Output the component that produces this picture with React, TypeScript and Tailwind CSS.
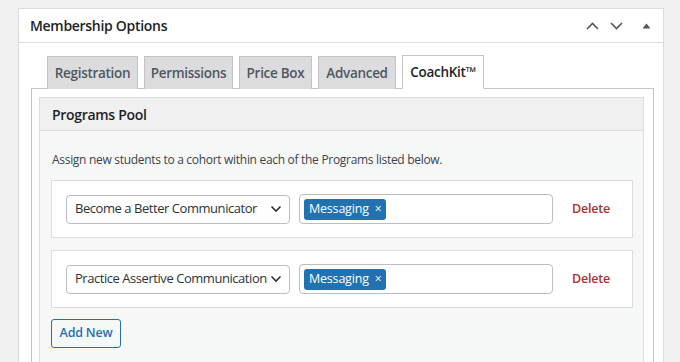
import React from 'react';

const font = { fontFamily: '"Open Sans", "Noto Sans", sans-serif' };

function Chevron({ up }: { up?: boolean }) {
  return (
    <svg width="13" height="8" viewBox="0 0 13 8" fill="none">
      <path
        d={up ? 'M1 7 L6.5 1.5 L12 7' : 'M1 1 L6.5 6.5 L12 1'}
        stroke="#50575e"
        strokeWidth="1.6"
      />
    </svg>
  );
}

function ProgramRow({ name }: { name: string }) {
  return (
    <div className="flex items-center bg-white border border-[#dcdcde] h-[58px] pl-[14px]">
      <div className="flex items-center justify-between w-[224px] h-[29px] border border-[#bcbdc0] rounded-[4px] bg-white pl-[8px] pr-[7px] text-[#2c3338] text-[13px] tracking-[-0.45px]">
        <span className="whitespace-nowrap">{name}</span>
        <svg width="12" height="8" viewBox="0 0 12 8" fill="none" className="shrink-0 ml-[2px]">
          <path d="M1.5 1.5 L6 6 L10.5 1.5" stroke="#2c3338" strokeWidth="1.6" />
        </svg>
      </div>
      <div className="ml-[9px] flex items-center w-[254px] h-[30px] border border-[#bcbdc0] rounded-[4px] bg-white pl-[4px]">
        <span className="flex items-center h-[21px] px-[5px] rounded-[3px] bg-[#2271b1] text-white text-[12.5px] tracking-[-0.2px]">
          Messaging<span className="ml-[6px] text-[12px]">×</span>
        </span>
      </div>
      <span className="ml-[19px] text-[#b32d2e] text-[12.5px] font-semibold tracking-[-0.2px]">Delete</span>
    </div>
  );
}

export default function App() {
  const tabs = [
    { label: 'Registration', w: 'w-[91px]' },
    { label: 'Permissions', w: 'w-[89px]' },
    { label: 'Price Box', w: 'w-[73px]' },
    { label: 'Advanced', w: 'w-[78px]' },
  ];

  return (
    <div className="w-[680px] h-[362px] overflow-hidden bg-[#f0f0f1] pt-[8px] pl-[18px]" style={font}>
      <div className="w-[646px] bg-white border border-[#dcdcde]">
        <div className="flex items-center justify-between h-[34px] border-b border-[#dcdcde] pl-[11px] pr-[12px]">
          <h2 className="text-[14px] font-semibold text-[#1d2327] tracking-[-0.3px]">Membership Options</h2>
          <div className="flex items-center gap-[11px]">
            <Chevron up />
            <Chevron />
            <svg width="9" height="6" viewBox="0 0 9 6" className="ml-[8px]">
              <path d="M0.5 5.5 L4.5 0.5 L8.5 5.5 Z" fill="#50575e" />
            </svg>
          </div>
        </div>

        <div className="pt-[12px] pl-[12px] pr-[9px]">
          <div className="flex items-end gap-[6px] pl-[16px] relative z-10 -mb-px">
            {tabs.map((t) => (
              <div
                key={t.label}
                className={`${t.w} h-[33px] flex items-center justify-center bg-[#dcdcde] border border-[#c3c4c7] border-b-0 text-[#50575e] text-[13.5px] font-semibold tracking-[-0.3px]`}
              >
                {t.label}
              </div>
            ))}
            <div className="w-[82px] h-[34px] flex items-center justify-center bg-white border border-[#c3c4c7] border-b-white text-[#1d2327] text-[13.5px] font-semibold tracking-[-0.3px]">
              CoachKit™
            </div>
          </div>

          <div className="border border-[#c3c4c7] pt-[8px] pl-[7px] pr-[9px]">
            <div className="border border-[#dcdcde]">
              <div className="h-[33px] flex items-center bg-[#f0f0f1] border-b border-[#dcdcde] pl-[12px] text-[14px] font-semibold text-[#1d2327] tracking-[-0.3px]">
                Programs Pool
              </div>
              <div className="bg-[#f6f7f7] pt-[19px] pl-[11px] pr-[10px] pb-[20px]">
                <p className="text-[12px] text-[#3c434a] leading-[20px] tracking-[-0.3px] pl-[1px]">
                  Assign new students to a cohort within each of the Programs listed below.
                </p>
                <div className="mt-[10px] flex flex-col gap-[12px]">
                  <ProgramRow name="Become a Better Communicator" />
                  <ProgramRow name="Practice Assertive Communication" />
                </div>
                <button className="mt-[11px] w-[70px] h-[29px] border border-[#2271b1] rounded-[3px] bg-[#f6f7f7] text-[#2271b1] text-[12.5px] font-semibold tracking-[-0.2px]">
                  Add New
                </button>
              </div>
            </div>
          </div>
        </div>
      </div>
    </div>
  );
}
